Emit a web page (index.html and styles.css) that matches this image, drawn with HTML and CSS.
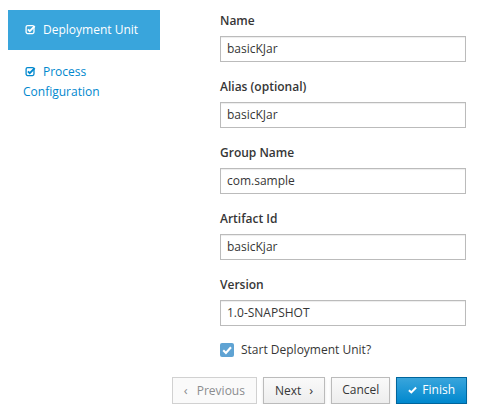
FILE: index.html
```
<!DOCTYPE html>
<html>
<head>
<meta charset="utf-8">
<link rel="stylesheet" href="styles.css">
</head>
<body>
<div class="wizard">
  <ul class="steps">
    <li class="step active"><svg class="sq" viewBox="0 0 12 12"><rect x="1.2" y="1.8" width="8.6" height="8.6" rx="1.6" fill="none" stroke="currentColor" stroke-width="1.4"/><path d="M3.2 5.8 L5.2 7.8 L10.6 2.4" fill="none" stroke="currentColor" stroke-width="2"/></svg>Deployment Unit</li>
    <li class="step"><svg class="sq" viewBox="0 0 12 12"><rect x="1.2" y="1.8" width="8.6" height="8.6" rx="1.6" fill="none" stroke="currentColor" stroke-width="1.4"/><path d="M3.2 5.8 L5.2 7.8 L10.6 2.4" fill="none" stroke="currentColor" stroke-width="2"/></svg>Process Configuration</li>
  </ul>
  <form class="form">
    <div class="group">
      <label class="lbl">Name</label>
      <div class="input">basicKJar</div>
    </div>
    <div class="group">
      <label class="lbl">Alias (optional)</label>
      <div class="input">basicKJar</div>
    </div>
    <div class="group">
      <label class="lbl">Group Name</label>
      <div class="input">com.sample</div>
    </div>
    <div class="group">
      <label class="lbl">Artifact Id</label>
      <div class="input">basicKjar</div>
    </div>
    <div class="group">
      <label class="lbl">Version</label>
      <div class="input">1.0-SNAPSHOT</div>
    </div>
    <div class="check">
      <span class="box"><svg viewBox="0 0 13 13"><path d="M3 6.8 L5.5 9.2 L10.2 4" fill="none" stroke="#fff" stroke-width="2"/></svg></span>
      <span>Start Deployment Unit?</span>
    </div>
    <div class="buttons">
      <span class="btn disabled"><span class="ang">&lsaquo;</span>Previous</span>
      <span class="btn">Next<span class="ang r">&rsaquo;</span></span>
      <span class="btn cancel">Cancel</span>
      <span class="btn primary"><svg class="ok" viewBox="0 0 10 8"><path d="M1 4.2 L3.7 6.6 L9 1.3" fill="none" stroke="#fff" stroke-width="2.2"/></svg>Finish</span>
    </div>
  </form>
</div>
</body>
</html>
```
FILE: styles.css
```
body {
  margin: 8px;
  font-family: "Open Sans", "Liberation Sans", sans-serif;
  font-size: 12px;
  line-height: 20px;
  color: #363636;
  background: #fff;
}
.wizard {
  display: flex;
  gap: 60px;
}
.steps {
  list-style: none;
  margin: 2px 0 0 0;
  padding: 0;
  width: 152px;
  flex: none;
}
.step {
  padding: 10px 15px;
  color: #0088ce;
  font-size: 12px;
  line-height: 20px;
}
.step + .step {
  padding-top: 12px;
}
.step.active {
  background: #39a5dc;
  color: #fff;
}
.sq {
  width: 11px;
  height: 11px;
  margin: 0 7px 0 2px;
  vertical-align: -1px;
}
.form {
  width: 246px;
  margin: 3px 0 0 0;
}
.group {
  margin-bottom: 15px;
}
.lbl {
  display: block;
  font-weight: 600;
  margin-bottom: 5px;
}
.input {
  height: 24px;
  border: 1px solid #bbb;
  padding: 0 6px;
  line-height: 24px;
  box-shadow: inset 0 1px 1px rgba(3, 3, 3, 0.075);
}
.check {
  display: flex;
  align-items: center;
  gap: 7px;
  height: 20px;
  margin-top: -1px;
}
.box {
  width: 14px;
  height: 14px;
  border-radius: 2px;
  background: #5fa3d3;
  display: flex;
}
.box svg {
  width: 14px;
  height: 14px;
}
.buttons {
  display: flex;
  justify-content: flex-end;
  gap: 6px;
  margin-top: 17px;
  margin-right: -1px;
  margin-left: -60px;
}
.btn {
  display: inline-block;
  padding: 2px 11px;
  border: 1px solid #bbb;
  background: linear-gradient(#fafafa, #ededed);
  color: #363636;
  line-height: 20px;
  box-shadow: 0 2px 3px rgba(3, 3, 3, 0.1);
}
.btn.cancel {
  padding: 2px 10px;
}
.btn.disabled {
  border-color: #d1d1d1;
  background: #fafafa;
  color: #8b8d8f;
  box-shadow: none;
}
.btn.primary {
  background: linear-gradient(#39a5dc, #0088ce);
  border-color: #00659c;
  color: #fff;
}
.ang {
  font-size: 13px;
  margin-right: 9px;
}
.ang.r {
  margin: 0 0 0 8px;
}
.ok {
  width: 9px;
  height: 8px;
  margin-right: 5px;
  vertical-align: 0;
}
```
